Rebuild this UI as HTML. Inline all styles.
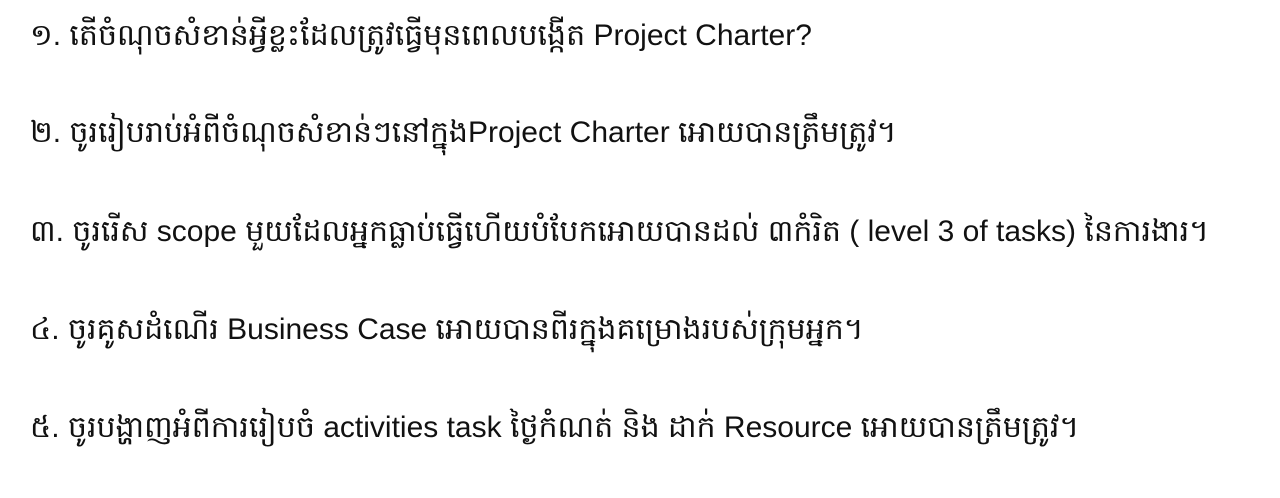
<!DOCTYPE html>
<html>
<head>
<meta charset="utf-8">
<style>
html,body{margin:0;padding:0;background:#fff;}
body{width:1280px;height:498px;overflow:hidden;position:relative;font-family:"Liberation Sans","DejaVu Sans",sans-serif;color:#111;}
.l{position:absolute;left:30px;font-size:30px;line-height:40px;white-space:nowrap;}
</style>
</head>
<body>
<div class="l" style="top:16px">១. តើចំណុចសំខាន់អ្វីខ្លះដែលត្រូវធ្វើមុនពេលបង្កើត Project Charter?</div>
<div class="l" style="top:113px">២. ចូររៀបរាប់អំពីចំណុចសំខាន់ៗនៅក្នុងProject Charter អោយបានត្រឹមត្រូវ។</div>
<div class="l" style="top:212px">៣. ចូររើស scope មួយដែលអ្នកធ្លាប់ធ្វើហើយបំបែកអោយបានដល់ ៣កំរិត ( level 3 of tasks) នៃការងារ។</div>
<div class="l" style="top:310px">៤. ចូរគូសដំណើរ Business Case អោយបានពីរក្នុងគម្រោងរបស់ក្រុមអ្នក។</div>
<div class="l" style="top:408px">៥. ចូរបង្ហាញអំពីការរៀបចំ activities task ថ្ងៃកំណត់ និង ដាក់ Resource អោយបានត្រឹមត្រូវ។</div>
</body>
</html>
